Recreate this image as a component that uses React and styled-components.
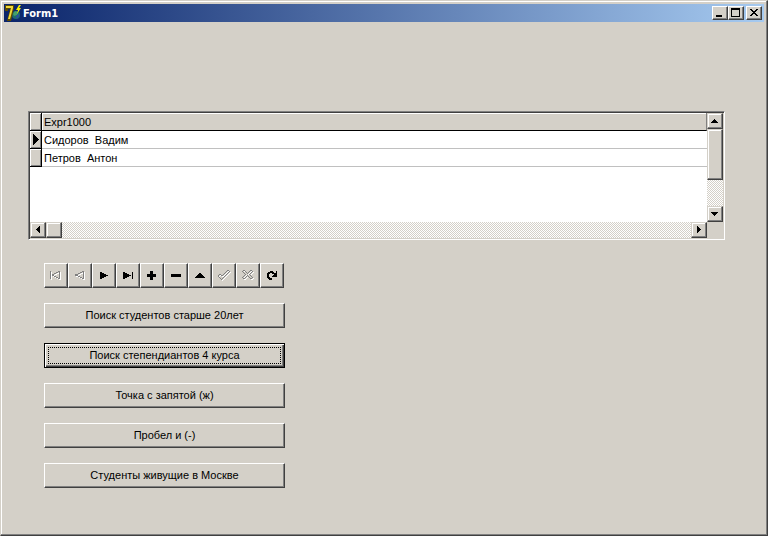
import React, { useState } from "react";
import styled, { createGlobalStyle, css } from "styled-components";

const face = "#d4d0c8";
const shadow = "#808080";
const dark = "#404040";

const raised = css`
  border: 1px solid;
  border-color: #fff ${dark} ${dark} #fff;
  box-shadow: inset -1px -1px ${shadow};
  background-color: ${face};
`;

const scrollRaised = css`
  border: 1px solid;
  border-color: ${face} ${dark} ${dark} ${face};
  box-shadow: inset -1px -1px ${shadow}, inset 1px 1px #fff;
  background-color: ${face};
`;

const GlobalStyle = createGlobalStyle`
  * {
    box-sizing: border-box;
  }
  body {
    margin: 0;
    background: ${face};
    color: #000;
    font-family: "Liberation Sans", Arial, sans-serif;
    font-size: 11px;
    line-height: 13px;
  }
  button {
    font: inherit;
    color: inherit;
    padding: 0;
    border-radius: 0;
  }
  svg {
    display: block;
  }
`;

const Window = styled.div`
  ${scrollRaised}
  display: flex;
  flex-direction: column;
  min-height: 100vh;
  padding: 3px;
`;

const TitleBar = styled.header`
  display: flex;
  align-items: center;
  height: 18px;
  padding: 0 2px 0 1px;
  background: linear-gradient(90deg, #0a246a, #a6caf0);
`;

const Title = styled.h1`
  flex: 1;
  margin: 0 0 0 2px;
  color: #fff;
  font-family: "DejaVu Sans Condensed", "DejaVu Sans", Tahoma, sans-serif;
  font-size: 11px;
  font-weight: bold;
`;

const CaptionButtons = styled.div`
  display: flex;
`;

const CaptionButton = styled.button`
  ${raised}
  display: flex;
  align-items: center;
  justify-content: center;
  width: 16px;
  height: 14px;
  margin-left: ${(props) => (props.$gap ? "2px" : "0")};
`;

const Form = styled.main`
  flex: 1;
  padding: 89px 39px 24px 24px;
`;

const GridFrame = styled.section`
  display: grid;
  grid-template-columns: 1fr 16px;
  grid-template-rows: 109px 16px;
  border: 1px solid;
  border-color: ${shadow} #fff #fff ${shadow};
  padding: 1px;
  box-shadow: inset 1px 1px ${dark};
  background: ${face};
`;

const TableArea = styled.div`
  overflow: hidden;
  background: #fff;
`;

const Table = styled.table`
  width: 100%;
  border-collapse: separate;
  border-spacing: 0;
  table-layout: fixed;
`;

const cell = css`
  height: 18px;
  padding: 2px 2px 0;
  text-align: left;
  font-weight: normal;
  white-space: pre;
`;

const HeadCell = styled.th`
  ${cell}
  background: ${face};
  border-bottom: 1px solid #000;
  border-right: 1px solid ${shadow};
  box-shadow: inset 1px 1px #fff;
`;

const Indicator = styled.td`
  ${cell}
  width: 12px;
  padding: 0 3px;
  background: ${face};
  border-right: 1px solid #000;
  border-bottom: 1px solid #000;
  box-shadow: inset 1px 1px #fff, inset -1px -1px ${shadow};
`;

const Cell = styled.td`
  ${cell}
  border-bottom: 1px solid #c0c0c0;
`;

const ScrollBar = styled.div`
  display: flex;
  flex-direction: ${(props) => (props.$vertical ? "column" : "row")};
  background: repeating-conic-gradient(#fff 0 25%, ${face} 0 50%) 0 0 / 2px 2px;
`;

const ScrollArrow = styled.button`
  ${scrollRaised}
  display: flex;
  align-items: center;
  justify-content: center;
  flex: none;
  width: 16px;
  height: 16px;
`;

const Thumb = styled.div`
  ${scrollRaised}
  width: 16px;
  height: ${(props) => (props.$long ? "51px" : "16px")};
`;

const Spacer = styled.div`
  flex: 1;
`;

const Navigator = styled.nav`
  display: flex;
  margin-top: 23px;
`;

const NavButton = styled.button`
  ${raised}
  display: flex;
  align-items: center;
  justify-content: center;
  width: 24px;
  height: 25px;
`;

const Controls = styled.div`
  width: 241px;
  margin-left: 16px;
`;

const Queries = styled.div`
  display: flex;
  flex-direction: column;
  gap: 15px;
  margin-top: 15px;
`;

const QueryButton = styled.button`
  ${raised}
  height: 25px;
  ${(props) =>
    props.$active &&
    css`
      border-color: #000;
      box-shadow: inset 1px 1px #fff, inset -1px -1px ${dark},
        inset -2px -2px ${shadow};
      outline: 1px dotted #000;
      outline-offset: -5px;
    `}
`;

// Draws a glyph from rows of characters, one filled pixel for each "#"
const Glyph = ({ rows, disabled }) => {
  let d = "";
  rows.forEach((row, y) => {
    [...row].forEach((ch, x) => {
      if (ch === "#") d += `M${x} ${y}h1v1h-1z`;
    });
  });
  const width = Math.max(...rows.map((row) => row.length));
  return (
    <svg
      width={width}
      height={rows.length}
      shapeRendering="crispEdges"
      overflow="visible"
      aria-hidden="true"
    >
      {disabled && <path d={d} fill="#fff" transform="translate(1 1)" />}
      <path d={d} fill={disabled ? shadow : "#000"} />
    </svg>
  );
};

const glyphs = {
  minimize: [
    "          ",
    "          ",
    "          ",
    "          ",
    "          ",
    "          ",
    " ######   ",
    " ######   ",
  ],
  maximize: [
    "######### ",
    "######### ",
    "#       # ",
    "#       # ",
    "#       # ",
    "#       # ",
    "#       # ",
    "#       # ",
    "######### ",
    "          ",
  ],
  close: [
    "##    ## ",
    " ##  ##  ",
    "  ####   ",
    "   ##    ",
    "  ####   ",
    " ##  ##  ",
    "##    ## ",
    "         ",
  ],
  current: [
    "#     ",
    "##    ",
    "###   ",
    "####  ",
    "##### ",
    "######",
    "##### ",
    "####  ",
    "###   ",
    "##    ",
    "#     ",
  ],
  scrollUp: ["   #    ", "  ###   ", " #####  ", "####### "],
  scrollDown: ["####### ", " #####  ", "  ###   ", "   #    "],
  scrollLeft: ["   # ", "  ## ", " ### ", "#### ", " ### ", "  ## ", "   # ", "     "],
  scrollRight: ["#   ", "##  ", "### ", "####", "### ", "##  ", "#   ", "    "],
};

const navItems = [
  {
    label: "First record",
    disabled: true,
    rows: [
      "              ",
      " #       ##   ",
      " #     ## #   ",
      " #   ##   #   ",
      " # ##     #   ",
      " # ##     #   ",
      " #   ##   #   ",
      " #     ## #   ",
      " #       ##   ",
      "              ",
      "              ",
    ],
  },
  {
    label: "Prior record",
    disabled: true,
    rows: [
      "              ",
      "         ##   ",
      "       ## #   ",
      "     ##   #   ",
      "  ###     #   ",
      "  ###     #   ",
      "     ##   #   ",
      "       ## #   ",
      "         ##   ",
      "              ",
      "              ",
    ],
  },
  {
    label: "Next record",
    rows: [
      "              ",
      "              ",
      "   ##         ",
      "   ####       ",
      "   ######     ",
      "   ########   ",
      "   ######     ",
      "   ####       ",
      "   ##         ",
      "              ",
      "              ",
    ],
  },
  {
    label: "Last record",
    rows: [
      "              ",
      "              ",
      "  ##       #  ",
      "  ####     #  ",
      "  ######   #  ",
      "  ######## #  ",
      "  ######   #  ",
      "  ####     #  ",
      "  ##       #  ",
      "              ",
      "              ",
    ],
  },
  {
    label: "Insert record",
    rows: [
      "              ",
      "     ###      ",
      "     ###      ",
      "     ###      ",
      "  #########   ",
      "  #########   ",
      "  #########   ",
      "     ###      ",
      "     ###      ",
      "     ###      ",
      "              ",
    ],
  },
  {
    label: "Delete record",
    rows: [
      "              ",
      "              ",
      "              ",
      "              ",
      "  ##########  ",
      "  ##########  ",
      "  ##########  ",
      "              ",
      "              ",
      "              ",
      "              ",
    ],
  },
  {
    label: "Edit record",
    rows: [
      "              ",
      "              ",
      "              ",
      "      ##      ",
      "     ####     ",
      "    ######    ",
      "   ########   ",
      "  ##########  ",
      "              ",
      "              ",
      "              ",
    ],
  },
  {
    label: "Post edit",
    disabled: true,
    rows: [
      "          ##  ",
      "         #  # ",
      "        #  #  ",
      "       #  #   ",
      "  ##  #  #    ",
      " #  ##  #     ",
      " #     #      ",
      "  #   #       ",
      "   # #        ",
      "    #         ",
      "              ",
    ],
  },
  {
    label: "Cancel edit",
    disabled: true,
    rows: [
      "  ##     ##   ",
      " #  #   #  #  ",
      "  #  # #  #   ",
      "   #  #  #    ",
      "    #   #     ",
      "   #  #  #    ",
      "  #  # #  #   ",
      " #  #   #  #  ",
      "  ##     ##   ",
      "              ",
      "              ",
    ],
  },
  {
    label: "Refresh data",
    rows: [
      "              ",
      "     ###   #  ",
      "   ######  #  ",
      "  ###  #####  ",
      "  ##     ###  ",
      "  ##    ####  ",
      "  ##   #####  ",
      "  ###         ",
      "   ####       ",
      "    ###       ",
      "              ",
    ],
  },
];

const AppIcon = () => (
  <svg width="16" height="16" viewBox="0 0 16 16" aria-hidden="true">
    <circle cx="11" cy="10" r="4" fill="#1c6b6c" />
    <path d="M8 9l2-3 3 1-1 3-3 1z" fill="#45a06a" />
    <path d="M11 11l3-2v2l-2 3z" fill="#2a4fa0" />
    <path d="M0 0h9v3L6 16H2L5 4H3v2H0z" fill="#5c4a00" />
    <path d="M1 1h7v2L5 14H3L6 3H1z" fill="#f0d838" />
    <path d="M14 0l-3 5h2l-1 4 4-6h-2l2-3z" fill="#f8f000" />
  </svg>
);

const records = ["Сидоров  Вадим", "Петров  Антон"];

const queries = [
  "Поиск студентов старше 20лет",
  "Поиск степендиантов 4 курса",
  "Точка с запятой (ж)",
  "Пробел и (-)",
  "Студенты живущие в Москве",
];

const App = () => {
  const [active, setActive] = useState(1);

  return (
    <>
      <GlobalStyle />
      <Window>
        <TitleBar>
          <AppIcon />
          <Title>Form1</Title>
          <CaptionButtons>
            <CaptionButton aria-label="Minimize">
              <Glyph rows={glyphs.minimize} />
            </CaptionButton>
            <CaptionButton aria-label="Maximize">
              <Glyph rows={glyphs.maximize} />
            </CaptionButton>
            <CaptionButton aria-label="Close" $gap>
              <Glyph rows={glyphs.close} />
            </CaptionButton>
          </CaptionButtons>
        </TitleBar>

        <Form>
          <GridFrame>
            <TableArea>
              <Table>
                <thead>
                  <tr>
                    <Indicator />
                    <HeadCell scope="col">Expr1000</HeadCell>
                  </tr>
                </thead>
                <tbody>
                  {records.map((name, index) => (
                    <tr key={name}>
                      <Indicator>
                        {index === 0 && <Glyph rows={glyphs.current} />}
                      </Indicator>
                      <Cell>{name}</Cell>
                    </tr>
                  ))}
                </tbody>
              </Table>
            </TableArea>
            <ScrollBar $vertical>
              <ScrollArrow aria-label="Scroll up">
                <Glyph rows={glyphs.scrollUp} />
              </ScrollArrow>
              <Thumb $long />
              <Spacer />
              <ScrollArrow aria-label="Scroll down">
                <Glyph rows={glyphs.scrollDown} />
              </ScrollArrow>
            </ScrollBar>
            <ScrollBar>
              <ScrollArrow aria-label="Scroll left">
                <Glyph rows={glyphs.scrollLeft} />
              </ScrollArrow>
              <Thumb />
              <Spacer />
              <ScrollArrow aria-label="Scroll right">
                <Glyph rows={glyphs.scrollRight} />
              </ScrollArrow>
            </ScrollBar>
          </GridFrame>

          <Controls>
            <Navigator>
              {navItems.map((item) => (
                <NavButton
                  key={item.label}
                  aria-label={item.label}
                  disabled={item.disabled}
                >
                  <Glyph rows={item.rows} disabled={item.disabled} />
                </NavButton>
              ))}
            </Navigator>
            <Queries>
              {queries.map((text, index) => (
                <QueryButton
                  key={text}
                  $active={index === active}
                  onClick={() => setActive(index)}
                >
                  {text}
                </QueryButton>
              ))}
            </Queries>
          </Controls>
        </Form>
      </Window>
    </>
  );
};

export default App;
